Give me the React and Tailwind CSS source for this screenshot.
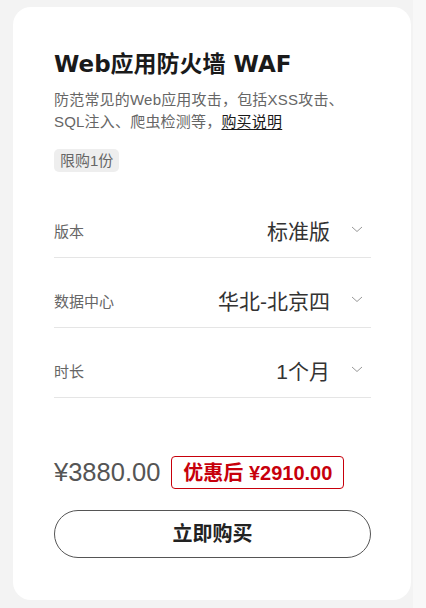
import React from "react";

const font = { fontFamily: '"Liberation Sans", "Noto Sans CJK SC", sans-serif' };
const titleFont = { fontFamily: '"DejaVu Sans", "Noto Sans CJK SC", sans-serif' };

function Chevron() {
  return (
    <svg width="12" height="7" viewBox="0 0 12 7" className="shrink-0">
      <path d="M1 1 L6 5.5 L11 1" fill="none" stroke="#999" strokeWidth="1" />
    </svg>
  );
}

function Row({ label, value }) {
  return (
    <div className="flex items-center pt-[32px] pb-[13px] border-b border-[#e5e5e5]">
      <div className="text-[15px] leading-[24px] text-[#666]">{label}</div>
      <div className="ml-auto flex items-center">
        <div className="text-[21px] leading-[24px] text-[#333]">{value}</div>
        <div className="ml-[21px] mr-[8px] -mt-[5px]">
          <Chevron />
        </div>
      </div>
    </div>
  );
}

export default function App() {
  return (
    <div className="flex w-[426px] h-[608px] bg-[#f3f3f3]" style={font}>
      <div className="w-[413px] pt-[7px] pl-[13px] pr-[2px]">
        <div className="bg-white rounded-[18px] h-[593px] pl-[41px] pr-[40px] pt-[42px]">
          <div className="text-[23px] leading-[30px] font-bold text-[#1a1a1a]" style={titleFont}>
            Web应用防火墙 WAF
          </div>
          <div className="mt-[10px] text-[15px] leading-[22px] tracking-[0.2px] text-[#666]">
            防范常见的Web应用攻击，包括XSS攻击、
            <br />
            SQL注入、爬虫检测等，
            <span className="text-[#1a1a1a] underline underline-offset-2">购买说明</span>
          </div>
          <div className="mt-[16px] flex">
            <div className="bg-[#eeeeee] rounded-[5px] px-[6px] text-[15px] leading-[23px] text-[#666]">限购1份</div>
          </div>
          <div className="mt-[16px]">
            <Row label="版本" value="标准版" />
            <Row label="数据中心" value="华北-北京四" />
            <Row label="时长" value="1个月" />
          </div>
          <div className="mt-[58px] flex items-center">
            <div className="text-[25.5px] leading-[33px] text-[#555]">¥3880.00</div>
            <div className="ml-[11px] border border-[#c7000b] rounded-[4px] px-[11px] h-[33px] flex items-center text-[20px] font-bold text-[#c7000b]">
              优惠后 ¥2910.00
            </div>
          </div>
          <button className="mt-[21px] w-full h-[48px] rounded-full border border-[#555] bg-white text-[20px] font-bold text-[#222] flex items-center justify-center">
            立即购买
          </button>
        </div>
      </div>
      <div className="flex-1 bg-[#f8f8f8]" />
    </div>
  );
}
